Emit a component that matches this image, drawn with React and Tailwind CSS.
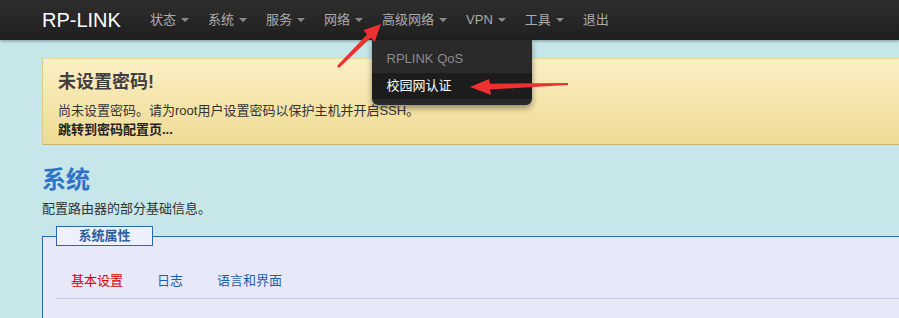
import React from "react";

const font = { fontFamily: '"Liberation Sans", "Noto Sans CJK SC", sans-serif' };

function Caret() {
  return (
    <span className="ml-[5px] inline-block h-0 w-0 border-x-[4px] border-t-[4px] border-x-transparent border-t-[#8a8a8a] align-middle" />
  );
}

function NavItem({ label, caret = true, children }) {
  return (
    <li className="relative flex h-[40px] items-center px-[9.5px] text-[13px] text-[#ababab]">
      <span>{label}</span>
      {caret && <Caret />}
      {children}
    </li>
  );
}

export default function App() {
  return (
    <div
      className="relative h-[318px] w-[899px] overflow-hidden bg-[#c6e6ea]"
      style={font}
    >
      {/* navbar */}
      <div className="flex h-[40px] items-center bg-gradient-to-b from-[#2e2e2e] to-[#1f1f1f] shadow-[0_1px_3px_rgba(0,0,0,0.35)]">
        <div className="ml-[42px] w-[98.5px] text-[20px] leading-[40px] text-white">RP-LINK</div>
        <ul className="flex">
          <NavItem label="状态" />
          <NavItem label="系统" />
          <NavItem label="服务" />
          <NavItem label="网络" />
          <NavItem label="高级网络">
            <div className="absolute left-[-1px] top-[40px] z-10 w-[160px] rounded-b-[6px] bg-[#2a2a2a] pb-[6px] shadow-[0_3px_6px_rgba(0,0,0,0.4)]">
              <div className="px-[15px] pt-[11px] pb-[6px] text-[13px] leading-[16px] text-[#8c8c8c]">RPLINK QoS</div>
              <div className="bg-[#1c1c1c] px-[15px] py-[4px] text-[13px] leading-[18px] text-white">校园网认证</div>
            </div>
          </NavItem>
          <NavItem label="VPN" />
          <NavItem label="工具" />
          <NavItem label="退出" caret={false} />
        </ul>
      </div>

      <div className="ml-[42px] w-[940px]">
        {/* alert */}
        <div className="mt-[18px] h-[87px] border border-t-[#e8d7a0] border-x-[#dcc98d] border-b-[#c8b678] bg-gradient-to-b from-[#fcefc4] to-[#eedb93] px-[15px] pt-[11px] text-[#3a3a3a]">
          <div className="text-[18px] font-bold leading-[24px] text-[#404040]">未设置密码!</div>
          <div className="mt-[7px] text-[13px] leading-[19px] text-[#333]">尚未设置密码。请为root用户设置密码以保护主机并开启SSH。</div>
          <div className="text-[13px] font-bold leading-[19px] text-[#222]">跳转到密码配置页...</div>
        </div>

        {/* heading */}
        <h2 className="mt-[20px] text-[24px] font-bold leading-[30px] text-[#2d74c6]">系统</h2>
        <p className="mt-[5px] text-[13px] leading-[18px] text-[#333]">配置路由器的部分基础信息。</p>

        {/* fieldset */}
        <div className="mt-[18px] h-[120px] border-l-[1.5px] border-t-[1.5px] border-[#2868b0] bg-[#e8e9f8]">
          <div className="-mt-[11px] ml-[13px] flex h-[20px] w-[97px] items-center justify-center border border-[#2868b0] bg-[#eef0fb] text-[13px] font-bold text-[#2c5fa0]">
            系统属性
          </div>
          <ul className="ml-[13px] mt-[26px] flex gap-[4px] border-b border-[#c9c9ea] pb-[8px] text-[13px] leading-[18px]">
            <li className="px-[15px] text-[#d40000]">基本设置</li>
            <li className="px-[15px] text-[#1f5fa8]">日志</li>
            <li className="px-[15px] text-[#1f5fa8]">语言和界面</li>
          </ul>
        </div>
      </div>

      {/* annotation arrows */}
      <svg className="pointer-events-none absolute left-0 top-0 z-20" width="899" height="318">
        <polygon
          points="337,66 339,68 370.8,37.8 374.7,41.7 381,24 363.3,30.3 367.2,34.2"
          fill="#ee3030"
        />
        <polygon
          points="568,83 568,85 490,89.4 491,95 470,87 489,79 490,83.8"
          fill="#ee3030"
        />
      </svg>
    </div>
  );
}
